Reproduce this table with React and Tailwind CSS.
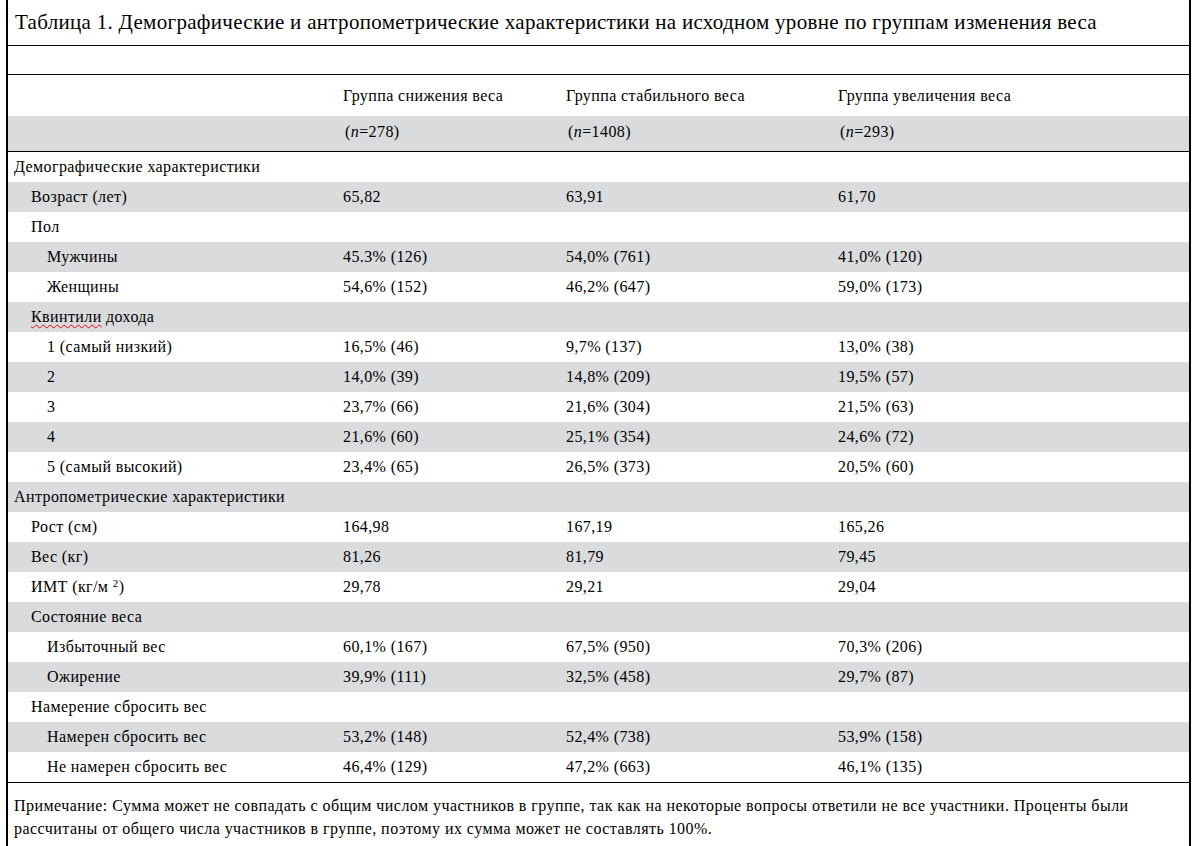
import React from 'react';

const groups = [
  { title: 'Группа снижения веса', n: '278' },
  { title: 'Группа стабильного веса', n: '1408' },
  { title: 'Группа увеличения веса', n: '293' },
];

const rows = [
  { label: 'Демографические характеристики', level: 0 },
  { label: 'Возраст (лет)', level: 1, values: ['65,82', '63,91', '61,70'] },
  { label: 'Пол', level: 1 },
  { label: 'Мужчины', level: 2, values: ['45.3% (126)', '54,0% (761)', '41,0% (120)'] },
  { label: 'Женщины', level: 2, values: ['54,6% (152)', '46,2% (647)', '59,0% (173)'] },
  { label: 'quintiles', level: 1 },
  { label: '1 (самый низкий)', level: 2, values: ['16,5% (46)', '9,7% (137)', '13,0% (38)'] },
  { label: '2', level: 2, values: ['14,0% (39)', '14,8% (209)', '19,5% (57)'] },
  { label: '3', level: 2, values: ['23,7% (66)', '21,6% (304)', '21,5% (63)'] },
  { label: '4', level: 2, values: ['21,6% (60)', '25,1% (354)', '24,6% (72)'] },
  { label: '5 (самый высокий)', level: 2, values: ['23,4% (65)', '26,5% (373)', '20,5% (60)'] },
  { label: 'Антропометрические характеристики', level: 0 },
  { label: 'Рост (см)', level: 1, values: ['164,98', '167,19', '165,26'] },
  { label: 'Вес (кг)', level: 1, values: ['81,26', '81,79', '79,45'] },
  { label: 'bmi', level: 1, values: ['29,78', '29,21', '29,04'] },
  { label: 'Состояние веса', level: 1 },
  { label: 'Избыточный вес', level: 2, values: ['60,1% (167)', '67,5% (950)', '70,3% (206)'] },
  { label: 'Ожирение', level: 2, values: ['39,9% (111)', '32,5% (458)', '29,7% (87)'] },
  { label: 'Намерение сбросить вес', level: 1 },
  { label: 'Намерен сбросить вес', level: 2, values: ['53,2% (148)', '52,4% (738)', '53,9% (158)'] },
  { label: 'Не намерен сбросить вес', level: 2, values: ['46,4% (129)', '47,2% (663)', '46,1% (135)'] },
];

const indent = ['pl-[6px]', 'pl-[23px]', 'pl-[39px]'];
const cols = 'grid grid-cols-[335px_223px_272px_1fr]';

function Label({ label }) {
  if (label === 'quintiles') {
    return (
      <span>
        <span className="underline decoration-wavy decoration-red-600 decoration-1 underline-offset-2">Квинтили</span> дохода
      </span>
    );
  }
  if (label === 'bmi') {
    return (
      <span>
        ИМТ (кг/м <sup className="text-[11px]">2</sup>)
      </span>
    );
  }
  return <span>{label}</span>;
}

export default function App() {
  return (
    <div className="h-[846px] overflow-hidden bg-white text-black [font-family:'Liberation_Serif','Times_New_Roman',serif]">
      <div className="ml-[6px] w-[1185px] h-full border-x-2 border-black">
        <div className="h-[46px] border-b border-black flex items-center pl-[7px] pt-[1px] text-[21px] tracking-[0.3px]">
          Таблица 1. Демографические и антропометрические характеристики на исходном уровне по группам изменения веса
        </div>
        <div className="h-[29px] border-b border-black" />

        <div className={`${cols} h-[41px] items-center text-[16px] tracking-[0.4px]`}>
          <div />
          {groups.map(g => (
            <div key={g.title}>{g.title}</div>
          ))}
        </div>
        <div className={`${cols} h-[36px] items-center bg-[#dadbdd] border-b border-black text-[16px] tracking-[0.4px] pb-[3px]`}>
          <div />
          {groups.map(g => (
            <div key={g.n} className="pl-[2px]">
              (<i>n</i>={g.n})
            </div>
          ))}
        </div>

        <div className="border-b border-black">
          {rows.map((r, i) => (
            <div
              key={i}
              className={`${cols} h-[30px] items-center text-[16px] tracking-[0.4px] ${i % 2 === 1 ? 'bg-[#dadbdd]' : ''}`}
            >
              <div className={indent[r.level]}>
                <Label label={r.label} />
              </div>
              {(r.values || ['', '', '']).map((v, j) => (
                <div key={j}>{v}</div>
              ))}
            </div>
          ))}
        </div>

        <div className="pt-[11px] pl-[6px] pr-[20px] text-[16px] tracking-[0.45px] leading-[23px]">
          Примечание: Сумма может не совпадать с общим числом участников в группе, так как на некоторые вопросы ответили не все участники. Проценты были рассчитаны от общего числа участников в группе, поэтому их сумма может не составлять 100%.
        </div>
      </div>
    </div>
  );
}
